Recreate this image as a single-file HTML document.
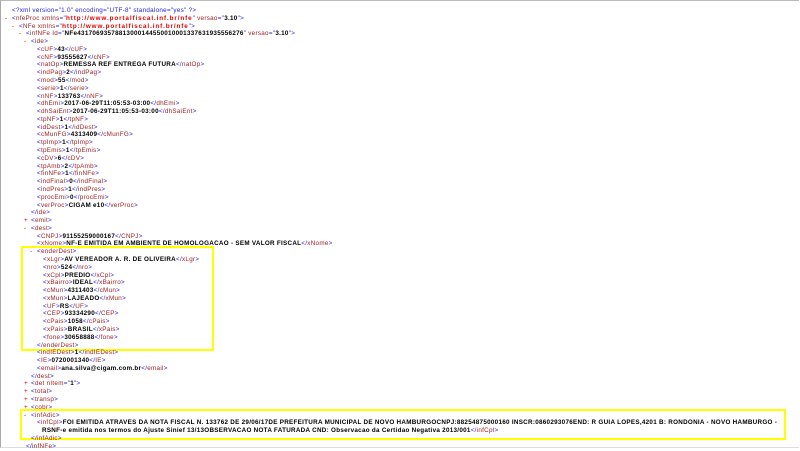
<!DOCTYPE html>
<html><head><meta charset="utf-8"><style>
html,body{margin:0;padding:0;background:#fff;}
body{width:800px;height:449px;overflow:hidden;position:relative;font-family:"Liberation Sans",Verdana,sans-serif;font-size:6.3px;letter-spacing:0.28px;}
.frame{position:absolute;left:0;top:0;width:798px;height:446px;border-left:1px solid #aaa;border-top:1px solid #bbb;border-bottom:1px solid #ddd;}
.l{position:absolute;height:8px;line-height:8px;white-space:nowrap;}
.b{color:#2222ee}.t{color:#a02020}.v{font-weight:bold;color:#000}.r{color:#e00000;font-weight:bold;letter-spacing:0.9px}.m{color:#e00000;position:absolute;margin-left:-7px}
.box{position:absolute;border:2px solid #ffff00;}
</style></head><body>
<div class="frame"></div>
<div class="box" style="left:21px;top:246px;width:189px;height:101px"></div>
<div class="box" style="left:20px;top:409px;width:762px;height:27px"></div>
<div id="c"></div>
<script>
var L=[
[12,'<span class="b">&lt;?xml version="1.0" encoding="UTF-8" standalone="yes" ?&gt;</span>'],
[12,'<span class="m">-</span><span class="b">&lt;</span><span class="t">nfeProc</span> <span class="t">xmlns</span><span class="b">="</span><span class="r">http://www.portalfiscal.inf.br/nfe</span><span class="b">"</span> <span class="t">versao</span><span class="b">="</span><span class="v">3.10</span><span class="b">"&gt;</span>'],
[19,'<span class="m">-</span><span class="b">&lt;</span><span class="t">NFe</span> <span class="t">xmlns</span><span class="b">="</span><span class="r">http://www.portalfiscal.inf.br/nfe</span><span class="b">"&gt;</span>'],
[26,'<span class="m">-</span><span class="b">&lt;</span><span class="t">infNFe</span> <span class="t">Id</span><span class="b">="</span><span class="v">NFe43170693578813000144550010001337631935556276</span><span class="b">"</span> <span class="t">versao</span><span class="b">="</span><span class="v">3.10</span><span class="b">"&gt;</span>'],
[31,'<span class="m">-</span><span class="b">&lt;</span><span class="t">ide</span><span class="b">&gt;</span>']
];
function e(ind,tag,val){L.push([ind,'<span class="b">&lt;</span><span class="t">'+tag+'</span><span class="b">&gt;</span><span class="v">'+val+'</span><span class="b">&lt;/</span><span class="t">'+tag+'</span><span class="b">&gt;</span>']);}
function o(ind,tag,sign){L.push([ind,(sign?'<span class="m">'+sign+'</span>':'')+'<span class="b">&lt;</span><span class="t">'+tag+'</span><span class="b">&gt;</span>']);}
function c(ind,tag){L.push([ind,'<span class="b">&lt;/</span><span class="t">'+tag+'</span><span class="b">&gt;</span>']);}
[['cUF','43'],['cNF','93555627'],['natOp','REMESSA REF ENTREGA FUTURA'],['indPag','2'],['mod','55'],['serie','1'],['nNF','133763'],['dhEmi','2017-06-29T11:05:53-03:00'],['dhSaiEnt','2017-06-29T11:05:53-03:00'],['tpNF','1'],['idDest','1'],['cMunFG','4313409'],['tpImp','1'],['tpEmis','1'],['cDV','6'],['tpAmb','2'],['finNFe','1'],['indFinal','0'],['indPres','1'],['procEmi','0'],['verProc','CIGAM e10']].forEach(function(a){e(37,a[0],a[1]);});
c(31,'ide');o(31,'emit','+');o(31,'dest','-');
e(37,'CNPJ','91155259000167');e(37,'xNome','NF-E EMITIDA EM AMBIENTE DE HOMOLOGACAO - SEM VALOR FISCAL');
o(37,'enderDest','-');
[['xLgr','AV VEREADOR A. R. DE OLIVEIRA'],['nro','524'],['xCpl','PREDIO'],['xBairro','IDEAL'],['cMun','4311403'],['xMun','LAJEADO'],['UF','RS'],['CEP','93334290'],['cPais','1058'],['xPais','BRASIL'],['fone','30658888']].forEach(function(a){e(43,a[0],a[1]);});
c(37,'enderDest');e(37,'indIEDest','1');e(37,'IE','0720001340');e(37,'email','ana.silva@cigam.com.br');c(31,'dest');
L.push([31,'<span class="m">+</span><span class="b">&lt;</span><span class="t">det</span> <span class="t">nItem</span><span class="b">="</span><span class="v">1</span><span class="b">"&gt;</span>']);
o(31,'total','+');o(31,'transp','+');o(31,'cobr','+');o(31,'infAdic','-');
L.push([37,'<span class="b">&lt;</span><span class="t">infCpl</span><span class="b">&gt;</span><span class="v">FOI EMITIDA ATRAVES DA NOTA FISCAL N. 133762 DE 29/06/17DE PREFEITURA MUNICIPAL DE NOVO HAMBURGOCNPJ:88254875000160 INSCR:0860293076END: R GUIA LOPES,4201 B: RONDONIA - NOVO HAMBURGO -</span>']);
L.push([42,'<span class="v">RSNF-e emitida nos termos do Ajuste Sinief 13/13OBSERVACAO NOTA FATURADA CND: Observacao da Certidao Negativa 2013/001</span><span class="b">&lt;/</span><span class="t">infCpl</span><span class="b">&gt;</span>']);
c(31,'infAdic');c(26,'infNFe');
var h='';L.forEach(function(a,i){h+='<div class="l" style="left:'+a[0]+'px;top:'+(7+i*7.78).toFixed(2)+'px">'+a[1]+'</div>';});
document.getElementById('c').innerHTML=h;
</script>
</body></html>
